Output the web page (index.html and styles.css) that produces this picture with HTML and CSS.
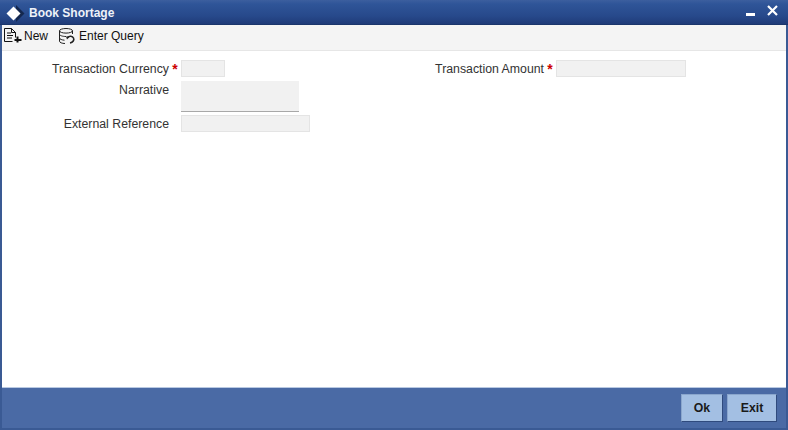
FILE: index.html
```html
<!DOCTYPE html>
<html lang="en">
<head>
<meta charset="utf-8">
<title>Book Shortage</title>
<link rel="stylesheet" href="styles.css">
</head>
<body>
<div class="window">
  <header class="titlebar">
    <svg class="logo" width="20" height="19" viewBox="0 0 20 19"><path d="M11 2 19.500 10.500 11 19Z" fill="#14284f"/><path d="M8.500 3.500 15.500 10.500 8.500 17.500 1.500 10.500Z" fill="#fff"/></svg>
    <span class="title">Book Shortage</span>
    <span class="spacer"></span>
    <svg class="winbtn" width="34" height="15" viewBox="0 0 34 15"><path d="M1 10h9v3H1Z" fill="#fff"/><path d="m23 3 9 9m0-9-9 9" stroke="#fff" stroke-width="2.200" fill="none"/></svg>
  </header>
  <nav class="toolbar">
    <button class="tool" type="button">
      <svg width="18" height="15" viewBox="0 0 18 15" fill="none" stroke="#111" stroke-width="1"><path d="M.5 13.500V.5h7l4 4v5M.5 13.500h8M3 5h4M3 7.500h6M3 10h5M7.500 .5v4h4"/><path d="M13.500 8.500v6M10.500 12h7" stroke-width="2"/></svg>
      <span>New</span>
    </button>
    <button class="tool" type="button">
      <svg width="19" height="16" viewBox="0 0 19 16" fill="none" stroke="#222" stroke-width="1"><ellipse cx="8" cy="2.800" rx="6.500" ry="2.300"/><path d="M1.500 2.800v10.400c0 1.300 2.500 2.300 5.500 2.300M14.500 2.800V6M1.500 6.200c0 1.300 3 2.300 6.500 2.300M1.500 10c0 1.200 2.500 2 5 2.200"/><path d="M9.500 9.500c2-2 5-1.500 6 .5s-.5 4.500-3.500 5" stroke-width="1.600"/><path d="M8 8.500h4l-3 3Z" fill="#222" stroke="none"/></svg>
      <span>Enter Query</span>
    </button>
  </nav>
  <main class="form">
    <div class="col col-left">
      <div class="row row-currency">
        <label class="lbl lbl-left">Transaction Currency</label><span class="req">*</span>
        <input class="field f-currency" type="text">
      </div>
      <div class="row row-narrative">
        <label class="lbl lbl-left">Narrative</label><span class="req"></span>
        <textarea class="field f-narrative"></textarea>
      </div>
      <div class="row row-ref">
        <label class="lbl lbl-left">External Reference</label><span class="req"></span>
        <input class="field f-ref" type="text">
      </div>
    </div>
    <div class="col col-right">
      <div class="row row-currency">
        <label class="lbl lbl-right">Transaction Amount</label><span class="req">*</span>
        <input class="field f-amount" type="text">
      </div>
    </div>
  </main>
  <footer class="footer">
    <button class="btn btn-ok" type="button">Ok</button>
    <button class="btn btn-exit" type="button">Exit</button>
  </footer>
</div>
</body>
</html>
```
FILE: styles.css
```css
* { box-sizing: border-box; }
html, body { margin: 0; padding: 0; }
body {
  width: 788px;
  height: 430px;
  overflow: hidden;
  font-family: "Liberation Sans", Arial, sans-serif;
  font-size: 12.3px;
  color: #333;
}
.window {
  width: 788px;
  height: 430px;
  display: flex;
  flex-direction: column;
  background: #3a5a94;
  padding: 0 2px 2px;
}
.titlebar {
  height: 25px;
  flex: none;
  margin: 0 -2px;
  padding: 0 5px;
  display: flex;
  align-items: flex-start;
  background: linear-gradient(#3c5f9e 0, #2f5598 4px, #27498b 16px, #1f3b78 24px, #16305f 25px);
  color: #fff;
}
.logo { margin: 3px 4px 0 0; }
.title { font-size: 12px; line-height: 27px; font-weight: bold; color: #eef2f8; }
.spacer { flex: 1; }
.winbtn { margin: 3px 4px 0 0; }
.toolbar {
  height: 26px;
  flex: none;
  display: flex;
  align-items: center;
  gap: 10px;
  padding: 0 0 4px 2px;
  background: #f4f4f4;
  border-bottom: 1px solid #e6e6e6;
}
.tool {
  display: flex;
  align-items: center;
  gap: 2px;
  padding: 0;
  border: 0;
  background: none;
  font: 12px "Liberation Sans", Arial, sans-serif;
  color: #111;
}
.form {
  flex: 1;
  background: #fff;
  display: flex;
  padding-top: 9px;
  border-bottom: 1px solid #b9c9e2;
}
.col-left { width: 421px; }
.col-left .lbl-left { width: 167px; }
.col-right { flex: 1; }
.row { display: flex; align-items: flex-start; }
.row-currency { height: 21px; }
.row-narrative { height: 34px; }
.lbl { text-align: right; line-height: 18px; color: #333; }
.lbl-right { width: 121px; }
.req {
  width: 12px;
  text-align: center;
  color: #c00;
  font-weight: bold;
  line-height: 18px;
  font-size: 14px;
}
.field {
  display: block;
  margin: 0;
  padding: 0;
  background: #f1f1f1;
  border: 1px solid #e4e4e4;
  border-radius: 0;
  resize: none;
  outline: none;
}
.f-currency { width: 44px; height: 17px; }
.f-amount { width: 130px; height: 17px; }
.f-narrative { width: 118px; height: 31px; border: 0; border-bottom: 1px solid #a8a8a8; }
.f-ref { width: 129px; height: 17px; }
.footer {
  height: 40px;
  flex: none;
  display: flex;
  justify-content: flex-end;
  align-items: flex-start;
  gap: 4px;
  padding: 6px 9px 0 0;
  background: #4a6aa5;
}
.btn {
  height: 28px;
  padding: 0;
  background: #a3bfe3;
  border: 1px solid #8aa6cd;
  border-right-color: #2f4a7d;
  border-bottom-color: #2f4a7d;
  font: bold 12.3px "Liberation Sans", Arial, sans-serif;
  color: #1a1a1a;
}
.btn-ok { width: 42px; }
.btn-exit { width: 50px; }
```
